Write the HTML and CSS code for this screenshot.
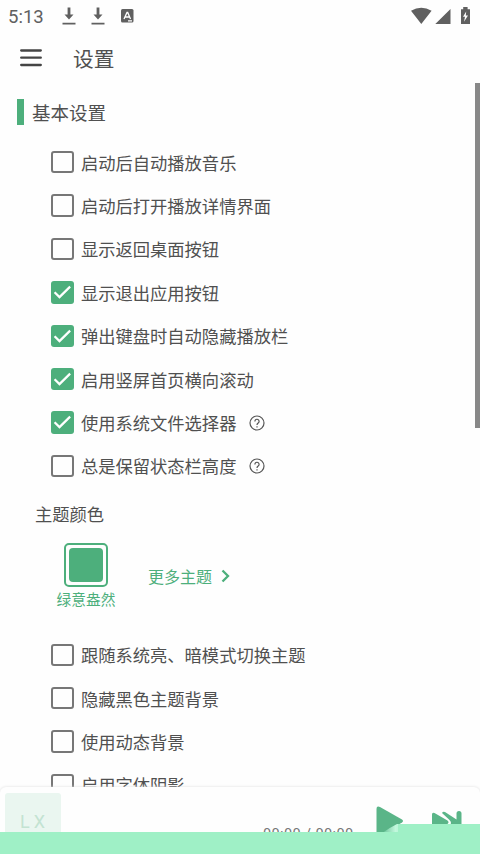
FILE: index.html
```html
<!DOCTYPE html>
<html lang="zh-CN">
<head>
<meta charset="utf-8">
<title>设置</title>
<link rel="stylesheet" href="styles.css">
</head>
<body>
<div class="screen">
  <div class="status">
    <span class="time">5:13</span>
    <svg class="dl" width="14" height="18" viewBox="0 0 14 18"><path d="M5.600 .5h2.800v7H11.500L7 12.400 2.500 7.500h3.100zM.5 15.800h13v1.600H.5z"/></svg>
    <svg class="dl" width="14" height="18" viewBox="0 0 14 18"><path d="M5.600 .5h2.800v7H11.500L7 12.400 2.500 7.500h3.100zM.5 15.800h13v1.600H.5z"/></svg>
    <svg class="app" width="13" height="14" viewBox="0 0 13 14"><rect width="12.500" height="13.500" rx="1.500"/><path d="M3 10 6 3.500h.7L9.500 10M4.300 8h4M7 11.800h4" fill="none" stroke="#fff" stroke-width="1.300"/></svg>
    <svg class="signals" width="60" height="18" viewBox="0 0 60 18"><path d="M0 3.800Q10.300-2.500 20.600 3.800L10.300 17zM39.500 2v15H24.300zM50 2.200h2.200V0h4.400v2.200H59V17h-9z"/><path d="m55.200 4.500-3.200 5.200h2l-1 5 4-6.200h-2.200z" fill="#fff"/></svg>
  </div>
  <header class="header">
    <svg width="22" height="18" viewBox="0 0 22 18"><path d="M1.200 1.500h19.600M1.200 8.700h19.600M1.200 16h19.600"/></svg>
    <h1>设置</h1>
  </header>
  <main class="content">
    <h2>基本设置</h2>
    <div class="options">
      <div class="option"><i class="box"></i><span>启动后自动播放音乐</span></div>
      <div class="option"><i class="box"></i><span>启动后打开播放详情界面</span></div>
      <div class="option"><i class="box"></i><span>显示返回桌面按钮</span></div>
      <div class="option"><i class="box on"><svg viewBox="0 0 22 22"><path d="m3.500 11 4.800 4.700L18.700 5.500"/></svg></i><span>显示退出应用按钮</span></div>
      <div class="option"><i class="box on"><svg viewBox="0 0 22 22"><path d="m3.500 11 4.800 4.700L18.700 5.500"/></svg></i><span>弹出键盘时自动隐藏播放栏</span></div>
      <div class="option"><i class="box on"><svg viewBox="0 0 22 22"><path d="m3.500 11 4.800 4.700L18.700 5.500"/></svg></i><span>启用竖屏首页横向滚动</span></div>
      <div class="option"><i class="box on"><svg viewBox="0 0 22 22"><path d="m3.500 11 4.800 4.700L18.700 5.500"/></svg></i><span>使用系统文件选择器</span><svg class="help" viewBox="0 0 16 16"><circle cx="8" cy="8" r="7"/><path d="M5.900 6.400a2.100 2.100 0 1 1 3.300 1.700Q8 8.900 8 9.900M8 11.200v1.200"/></svg></div>
      <div class="option"><i class="box"></i><span>总是保留状态栏高度</span><svg class="help" viewBox="0 0 16 16"><circle cx="8" cy="8" r="7"/><path d="M5.900 6.400a2.100 2.100 0 1 1 3.300 1.700Q8 8.900 8 9.900M8 11.200v1.200"/></svg></div>
    </div>
    <h3>主题颜色</h3>
    <div class="themes">
      <div class="theme"><div class="swatch"></div><span>绿意盎然</span></div>
      <div class="more"><span>更多主题</span><svg width="9" height="14" viewBox="0 0 9 14"><path d="m1.500 1.500 5.500 5.500-5.500 5.500"/></svg></div>
    </div>
    <div class="options">
      <div class="option"><i class="box"></i><span>跟随系统亮、暗模式切换主题</span></div>
      <div class="option"><i class="box"></i><span>隐藏黑色主题背景</span></div>
      <div class="option"><i class="box"></i><span>使用动态背景</span></div>
      <div class="option"><i class="box"></i><span>启用字体阴影</span></div>
    </div>
  </main>
  <div class="scrollbar"></div>
  <footer class="player">
    <div class="cover">LX</div>
    <span class="duration">00:00 / 00:00</span>
    <svg class="play" width="28" height="32" viewBox="0 0 28 32"><path d="M.5 3Q.5-.5 4 1L26 13.500Q28 15 26 16.500L4 30Q.5 31.500 .5 29z"/></svg>
    <svg class="next" width="30" height="28" viewBox="0 0 30 28"><path d="M0 3.500Q0 1 2.500 2L15.500 9.500Q17.500 11 16 12.500L0 24zM10 2Q11 0 13 1L24.500 8.500V2.500Q24.500 0 27 0t2.500 2.500V27h-5L16 20l3-8q0-2-2-3.500z"/></svg>
  </footer>
  <svg class="ribbon" width="480" height="30" viewBox="0 0 480 30">
    <defs><linearGradient id="fade"><stop stop-color="#6cc69a"/><stop offset=".5" stop-color="#c2f8dd"/><stop offset="1" stop-color="#9ff0c6"/></linearGradient></defs>
    <path d="M383 8.500Q391 3 397 0H408V8.500z" fill="url(#fade)"/>
    <path d="M0 8H398V0H480V30H0z"/>
  </svg>
</div>
</body>
</html>
```
FILE: styles.css
```css
* { box-sizing: border-box; }
body { margin: 0; background: #fefefe; color: #505050; font-family: "Noto Sans CJK SC", sans-serif; font-weight: 400; }
.screen { position: relative; width: 480px; height: 854px; overflow: hidden; display: flex; flex-direction: column; }
.status { height: 34px; flex: none; display: flex; align-items: flex-start; padding: 7px 9px 0 8px; fill: #606060; color: #606060; }
.time { font: 400 18.500px/21px Roboto, sans-serif; width: 54px; }
.dl { margin-right: 15px; }
.app { margin: 2px 0 0 1px; }
.signals { margin-left: auto; }
.header { height: 48px; flex: none; display: flex; align-items: center; gap: 31px; padding-left: 20px; }
.header svg { stroke: #444; stroke-width: 2.300; stroke-linecap: round; }
h1, h2, h3 { margin: 0; font-weight: 400; }
h1 { font-size: 20.700px; line-height: 30px; }
.content { flex: none; padding: 17px 0 0 17px; }
h2 { font-size: 18.500px; line-height: 26px; height: 26px; border-left: 7px solid #4daf7c; padding-left: 8px; margin-bottom: 15.500px; }
.options { padding-left: 34.400px; }
.option { height: 43.400px; display: flex; align-items: center; font-size: 17.300px; }
.box { width: 22.500px; height: 22.500px; flex: none; margin-right: 7px; border: 2px solid #777; border-radius: 3px; }
.box.on { border: 0; background: #4daf7c; }
.box svg { display: block; fill: none; stroke: #fff; stroke-width: 2.200; }
.help { width: 16px; height: 16px; margin-left: 13px; fill: none; stroke: #555; stroke-width: 1.200; }
h3 { font-size: 17.300px; line-height: 26px; margin: 13px 0 16.500px 18px; }
.themes { height: 90px; display: flex; color: #4daf7c; }
.theme { width: 60px; margin-left: 39px; display: flex; flex-direction: column; align-items: center; font-size: 14.700px; line-height: 22px; }
.swatch { width: 44px; height: 44px; border: 2px solid #4daf7c; border-radius: 5px; padding: 3px; margin-bottom: 1px; }
.swatch::before { content: ""; display: block; height: 34px; border-radius: 4px; background: #4daf7c; }
.more { display: flex; align-items: center; gap: 9px; height: 22px; margin: 22px 0 0 32px; font-size: 16px; }
.more svg { fill: none; stroke: #4daf7c; stroke-width: 2.300; }
.scrollbar { position: absolute; left: 475px; top: 83px; width: 5px; height: 345px; background: #888; }
.player { position: absolute; left: 0; top: 787px; width: 480px; height: 67px; display: flex; align-items: flex-start; background: #fefefe; border-radius: 6px; box-shadow: 0 0 3px #ddd; fill: #5ab588; }
.cover { width: 56px; height: 56px; margin: 6px 0 0 5px; border-radius: 3px; background: #eaf6f0; color: #c3e3d2; font: 400 18px/57px Roboto, sans-serif; letter-spacing: 4px; padding-left: 3px; text-align: center; }
.duration { margin: 38px 0 0 202px; width: 113px; font: 400 14.500px/20px Roboto, sans-serif; letter-spacing: .4px; white-space: nowrap; color: #777; }
.play { margin-top: 19px; }
.next { margin: 24px 0 0 28px; }
.ribbon { position: absolute; left: 0; bottom: 0; fill: #9ff0c6; }
```
